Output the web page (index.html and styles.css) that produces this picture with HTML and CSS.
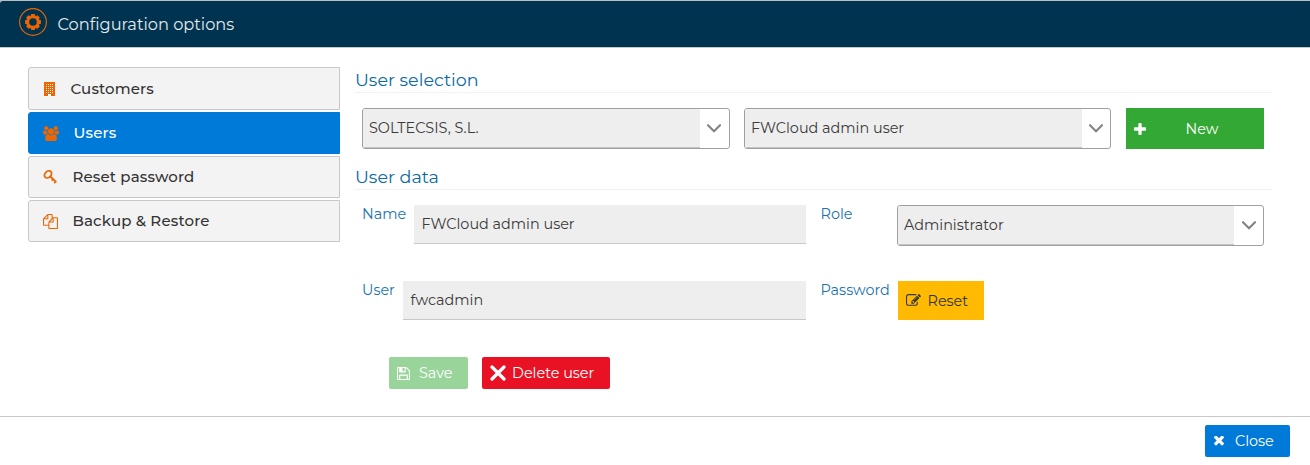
FILE: index.html
```html
<!DOCTYPE html>
<html lang="en">
<head>
<meta charset="utf-8">
<title>Configuration options</title>
<link rel="stylesheet" href="styles.css">
</head>
<body>
<div class="dialog">
  <header class="header">
    <svg class="gear" viewBox="0 0 28 28"><circle cx="14" cy="14" r="13.4" fill="none" stroke="#ec6602" stroke-width="1.1"/><circle cx="14" cy="14" r="5" fill="none" stroke="#ec6602" stroke-width="2.4"/><g fill="#ec6602"><path id="t" d="M12.300 6.100h3.400l1 3h-5.400zM12.300 21.900h3.400l1-3h-5.400z"/><use href="#t" transform="rotate(45 14 14)"/><use href="#t" transform="rotate(90 14 14)"/><use href="#t" transform="rotate(135 14 14)"/></g></svg>
    <h1 class="title">Configuration options</h1>
  </header>
  <main class="body">
    <nav class="menu">
      <a class="item item-first"><svg class="i-building" viewBox="0 0 12 14"><path fill="#ec6602" d="M1 0h11v14H8v-2H5v2H1z"/><path stroke="#fff" stroke-opacity=".85" stroke-width="1" stroke-dasharray="1 1" d="M3 2.500h7M3 4.500h7M3 6.500h7M3 8.500h7M3 10.500h7"/><path fill="#fff" d="M5 12h3v1.300H5z"/></svg><span>Customers</span></a>
      <a class="item active"><svg class="i-users" viewBox="0 0 1920 1792"><path d="M593 896q-162 5-265 128h-134q-82 0-138-40.500t-56-118.500q0-353 124-353 6 0 43.500 21t97.500 42.500 119 21.500q67 0 133-23-5 37-5 66 0 139 81 256zm1071 637q0 120-73 189.500t-194 69.500h-874q-121 0-194-69.500t-73-189.500q0-53 3.500-103.500t14-109 26.500-108.500 43-97.500 62-81 85.500-53.500 111.500-20q10 0 43 21.500t73 48 107 48 135 21.500 135-21.500 107-48 73-48 43-21.500q61 0 111.500 20t85.500 53.500 62 81 43 97.500 26.500 108.500 14 109 3.500 103.500zm-1024-1277q0 106-75 181t-181 75-181-75-75-181 75-181 181-75 181 75 75 181zm704 384q0 159-112.500 271.500t-271.500 112.500-271.500-112.500-112.500-271.500 112.500-271.500 271.500-112.500 271.500 112.500 112.500 271.500zm576 225q0 78-56 118.500t-138 40.500h-134q-103-123-265-128 81-117 81-256 0-29-5-66 66 23 133 23 59 0 119-21.500t97.500-42.500 43.500-21q124 0 124 353zm-128-609q0 106-75 181t-181 75-181-75-75-181 75-181 181-75 181 75 75 181z"/></svg><span>Users</span></a>
      <a class="item"><svg class="i-key" viewBox="0 0 14 14"><g fill="none" stroke="#ec6602" stroke-width="1.800"><ellipse cx="5" cy="4.400" rx="4" ry="3" transform="rotate(-45 5 4.400)"/><path d="M7.300 6.500l6 5.600M8.700 10.600l2-2M11.200 13.200l2-2"/></g></svg><span>Reset password</span></a>
      <a class="item"><svg class="i-files" viewBox="0 0 1792 1792"><path d="M1696 384q40 0 68 28t28 68v1216q0 40-28 68t-68 28h-960q-40 0-68-28t-28-68v-288h-544q-40 0-68-28t-28-68v-672q0-40 20-88t48-76l408-408q28-28 76-48t88-20h416q40 0 68 28t28 68v328q68-40 128-40h416zm-544 213l-299 299h299v-299zm-640-384l-299 299h299v-299zm196 647l316-316v-416h-384v416q0 40-28 68t-68 28h-416v640h512v-256q0-40 20-88t48-76zm956 804v-1152h-384v416q0 40-28 68t-68 28h-416v640h896z"/></svg><span>Backup &amp; Restore</span></a>
    </nav>
    <section class="content">
      <h2 class="heading">User selection</h2>
      <div class="selection">
        <div class="select"><span class="value">SOLTECSIS, S.L.</span><span class="arrow"><svg viewBox="0 0 14 9"><path d="M1 1.200l6 6 6-6"/></svg></span></div>
        <div class="select"><span class="value">FWCloud admin user</span><span class="arrow arrow-narrow"><svg viewBox="0 0 14 9"><path d="M1 1.200l6 6 6-6"/></svg></span></div>
        <button class="btn new"><svg class="i-plus" viewBox="192 128 1408 1408"><path d="M1600 736v192q0 40-28 68t-68 28h-416v416q0 40-28 68t-68 28h-192q-40 0-68-28t-28-68v-416h-416q-40 0-68-28t-28-68v-192q0-40 28-68t68-28h416v-416q0-40 28-68t68-28h192q40 0 68 28t28 68v416h416q40 0 68 28t28 68z"/></svg><span>New</span></button>
      </div>
      <h2 class="heading second">User data</h2>
      <div class="row">
        <div class="field"><label class="l-name">Name</label><div class="input">FWCloud admin user</div></div>
        <div class="field"><label class="l-role">Role</label><div class="select"><span class="value">Administrator</span><span class="arrow"><svg viewBox="0 0 14 9"><path d="M1 1.200l6 6 6-6"/></svg></span></div></div>
      </div>
      <div class="row row-user">
        <div class="field"><label class="l-user">User</label><div class="input">fwcadmin</div></div>
        <div class="field"><label class="l-pass">Password</label><button class="btn reset"><svg class="i-edit" viewBox="0 128 1792 1536"><path d="M888 1184l116-116-152-152-116 116v56h96v96h56zm440-720q-16-16-33 1l-350 350q-17 17-1 33t33-1l350-350q17-17 1-33zm80 594v190q0 119-84.500 203.500t-203.500 84.500h-832q-119 0-203.500-84.500t-84.500-203.500v-832q0-119 84.500-203.500t203.500-84.500h832q63 0 117 25 15 7 18 23 3 17-9 29l-49 49q-14 14-32 8-23-6-45-6h-832q-66 0-113 47t-47 113v832q0 66 47 113t113 47h832q66 0 113-47t47-113v-126q0-13 9-22l64-64q15-15 35-7t20 29zm-96-738l288 288-672 672h-288v-288zm444 132l-92 92-288-288 92-92q28-28 68-28t68 28l152 152q28 28 28 68t-28 68z"/></svg><span>Reset</span></button></div>
      </div>
      <div class="actions">
        <button class="btn save"><svg class="i-save" viewBox="128 128 1536 1536"><path d="M512 1536h768v-384h-768v384zm896 0h128v-896q0-14-10-38.500t-20-34.500l-281-281q-10-10-34-20t-39-10v416q0 40-28 68t-68 28h-576q-40 0-68-28t-28-68v-416h-128v1280h128v-416q0-40 28-68t68-28h832q40 0 68 28t28 68v416zm-384-928v-320q0-13-9.500-22.500t-22.500-9.500h-192q-13 0-22.500 9.500t-9.500 22.500v320q0 13 9.500 22.500t22.500 9.500h192q13 0 22.500-9.500t9.500-22.500zm640 32v928q0 40-28 68t-68 28h-1344q-40 0-68-28t-28-68v-1344q0-40 28-68t68-28h928q40 0 88 20t76 48l280 280q28 28 48 76t20 88z"/></svg><span>Save</span></button>
        <button class="btn delete"><svg class="i-cross" viewBox="0 0 16 16"><path d="M2 2l12 12M14 2L2 14" stroke="#fff" stroke-width="3.200" stroke-linecap="round"/></svg><span>Delete user</span></button>
      </div>
    </section>
  </main>
  <footer class="footer">
    <button class="btn close"><svg class="i-times" viewBox="302 434 1188 1188"><path d="M1490 1322q0 40-28 68l-136 136q-28 28-68 28t-68-28l-294-294-294 294q-28 28-68 28t-68-28l-136-136q-28-28-28-68t28-68l294-294-294-294q-28-28-28-68t28-68l136-136q28-28 68-28t68 28l294 294 294-294q28-28 68-28t68 28l136 136q28 28 28 68t-28 68l-294 294 294 294q28 28 28 68z"/></svg><span>Close</span></button>
  </footer>
</div>
</body>
</html>
```
FILE: styles.css
```css
* { box-sizing: border-box; }
body { margin: 0; background: #b9bec0; font-family: Montserrat, Inter, sans-serif; font-size: 14.400px; font-weight: 400; color: #3a3a3a; }
svg { display: block; flex: none; fill: currentColor; }
span, label { white-space: nowrap; }
.dialog { height: 465px; padding-top: 1px; display: flex; flex-direction: column; }
.header { height: 47px; background: #003350; border-bottom: 1px solid #c8c8c8; border-radius: 3px 0 0 0; display: flex; align-items: flex-start; padding: 7px 19px; gap: 10.500px; color: #e4eaee; }
.gear { width: 28px; height: 28px; }
.title { margin: 6px 0 0; font-size: 16.200px; line-height: 20px; font-weight: 400; white-space: nowrap; }
.body { flex: 1; background: #fff; display: flex; padding: 19px 38px 0 28px; gap: 15px; }
.menu { width: 312px; flex: none; display: flex; flex-direction: column; gap: 2px; }
.item { height: 42px; border: 1px solid #c8c8c8; border-radius: 3px 0 0 3px; background: #f3f3f3; display: flex; align-items: center; padding-left: 14px; font-size: 15px; font-weight: 500; letter-spacing: .14px; color: #333; }
.item span { line-height: 18px; margin-bottom: 1px; }
.item-first { height: 43px; }
.item-first span { margin-bottom: 0; }
.item svg { color: #ec6602; }
.item.active { background: #007ad9; border-color: #007ad9; color: #fff; }
.i-building { width: 12px; height: 14px; margin-right: 15.500px; }
.i-users { width: 16px; height: 15px; margin-right: 14.500px; }
.i-key { width: 14px; height: 14px; margin-right: 15.500px; }
.i-files { width: 15px; height: 15px; margin-right: 14.500px; }
.content { width: 917px; }
.heading { margin: 0; height: 26px; border-bottom: 1px solid #f2f2f2; font-size: 17.500px; line-height: 26px; font-weight: 400; color: #0b69a3; }
.selection { padding: 15px 8px 0 7px; display: grid; grid-template-columns: 368px 367px 138px; column-gap: 14px; }
.select { height: 41px; border: 1px solid #a0a0a0; border-radius: 3px; background: #fff; display: flex; overflow: hidden; }
.value { flex: 1; background: #eee; border-bottom: 1px solid #c4c4c4; padding-left: 6px; line-height: 38px; }
.arrow { width: 29px; display: flex; align-items: center; justify-content: center; }
.arrow-narrow { width: 28px; }
.arrow svg { width: 14px; height: 9px; margin-right: 1px; fill: none; stroke: #858585; stroke-width: 2.200; stroke-linecap: round; }
.arrow-narrow svg { margin-right: 0; }
.btn { border: 0; margin: 0; padding: 0; font: inherit; color: #fff; display: flex; align-items: center; border-radius: 2px; }
.new { margin-left: 1px; width: 138px; background: #34a835; height: 41px; border-radius: 0; padding-left: 8px; }
.i-plus { width: 12px; height: 12px; margin-right: 39.500px; }
.second { margin-top: 15px; }
.row { padding: 15px 8px 0 7px; height: 76px; display: grid; grid-template-columns: 444px 444px; column-gap: 14px; align-items: start; }
.row-user { height: 91px; }
.field { display: flex; align-items: flex-start; }
.field label { color: #1b74ac; line-height: 18px; flex: none; }
.l-name { width: 52px; }
.l-role { width: 77px; padding-left: .5px; }
.l-user { width: 41px; }
.l-pass { width: 78px; padding-left: .5px; }
.field .select { flex: 1; }
.field .arrow svg { margin-right: 0; }
.input { flex: 1; height: 39px; background: #eee; border-bottom: 1px solid #c8c8c8; padding-left: 7.500px; line-height: 38px; }
.reset { width: 86px; height: 39px; border-radius: 0; background: #ffba01; color: #333; padding-left: 8px; }
.i-edit { width: 15px; height: 13px; margin-right: 6.500px; }
.actions { display: flex; gap: 14px; padding-left: 34px; }
.save { width: 79px; height: 32px; background: #99d49b; padding-left: 8px; }
.i-save { width: 13px; height: 13px; margin-right: 9px; }
.delete { width: 128px; height: 32px; background: #e91224; padding-left: 8px; }
.i-cross { width: 16px; height: 16px; margin-right: 6px; }
.footer { height: 49px; background: #fff; border-top: 1px solid #c8c8c8; display: flex; justify-content: flex-end; align-items: flex-start; padding: 8px 20px 0; }
.close { width: 85px; height: 32px; background: #007ad9; padding-left: 9px; }
.i-times { width: 10px; height: 10px; margin-right: 11px; }
```
